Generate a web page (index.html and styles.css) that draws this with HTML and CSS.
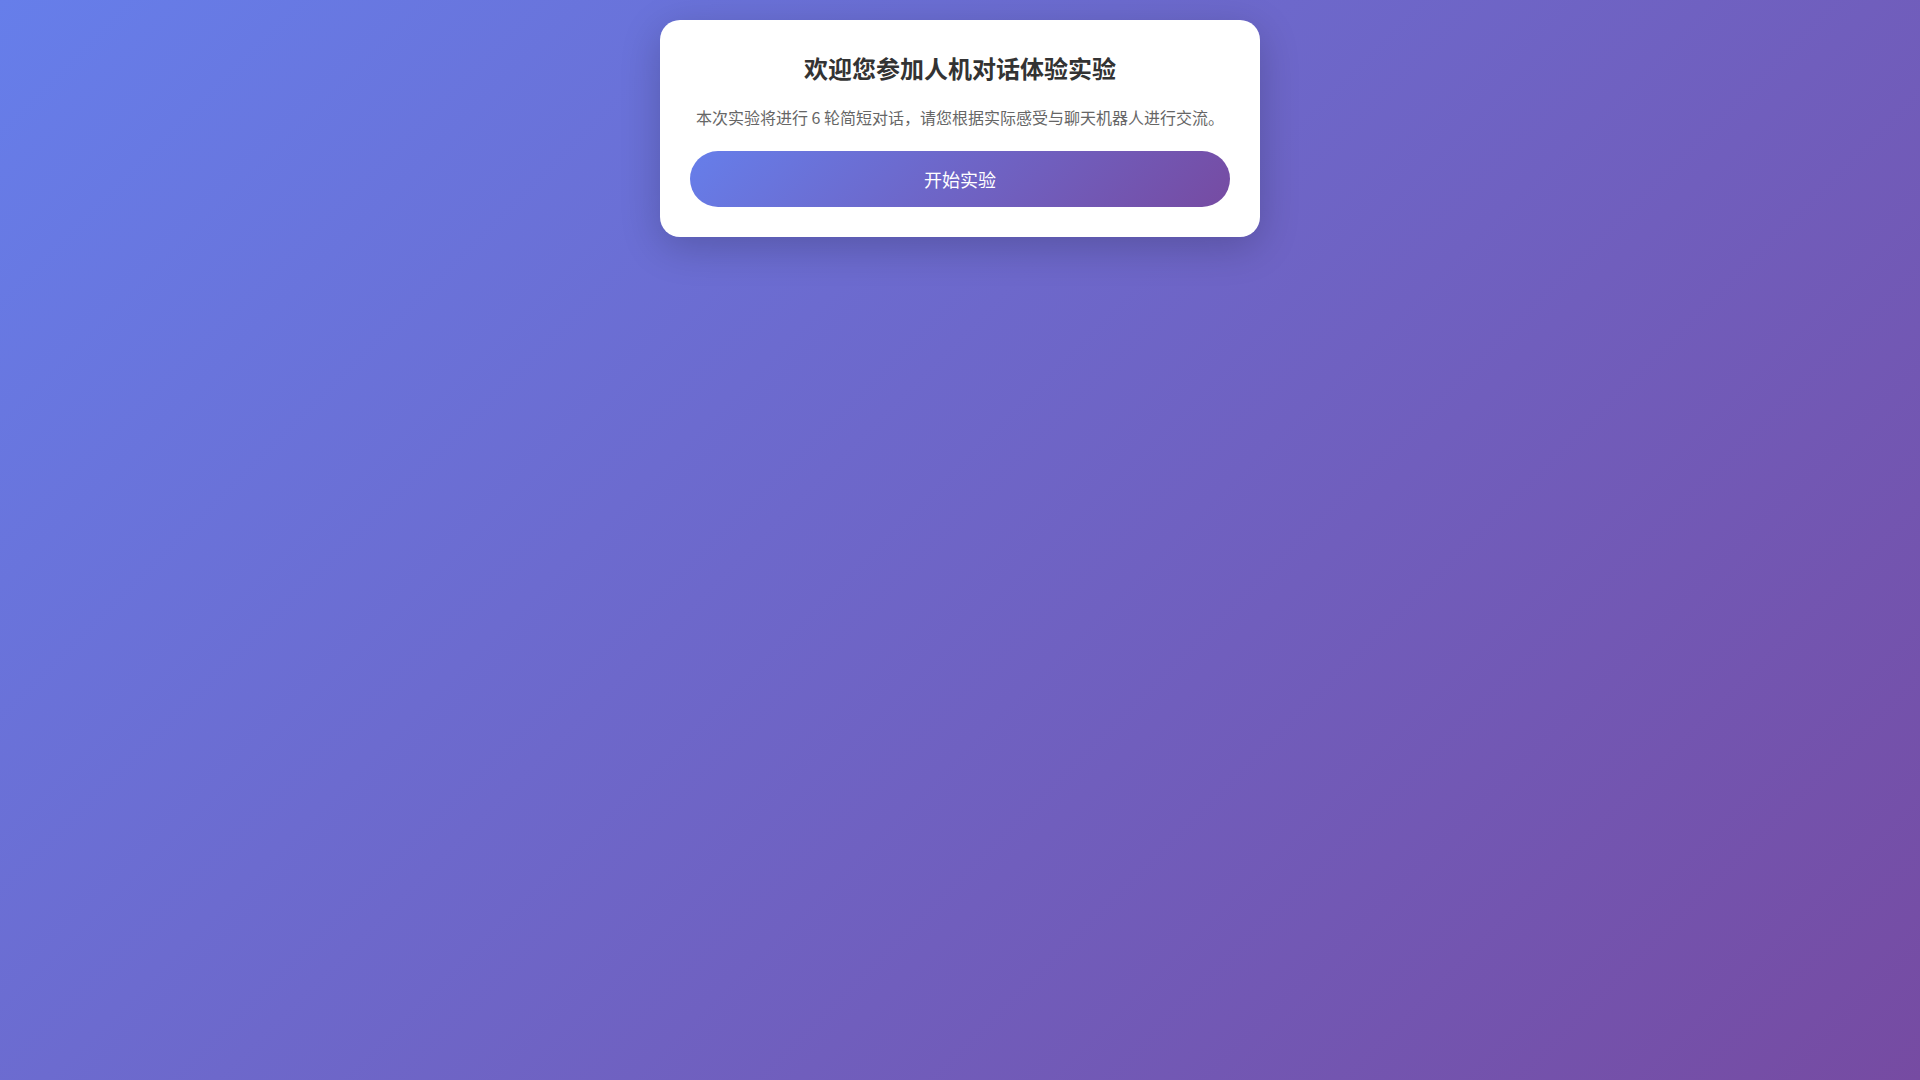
FILE: index.html
```html
<!DOCTYPE html>
<html lang="zh-CN">
<head>
<meta charset="UTF-8">
<title>人机对话体验实验</title>
<link rel="stylesheet" href="styles.css">
</head>
<body>
<main class="page">
  <section class="card">
    <h1 class="title">欢迎您参加人机对话体验实验</h1>
    <p class="desc">本次实验将进行 6 轮简短对话，请您根据实际感受与聊天机器人进行交流。</p>
    <button class="start-btn" type="button">开始实验</button>
  </section>
</main>
</body>
</html>
```
FILE: styles.css
```css
* { box-sizing: border-box; }
html, body { margin: 0; padding: 0; }
body {
  min-height: 100vh;
  background: linear-gradient(135deg, #667eea 0%, #764ba2 100%);
  font-family: "Noto Sans CJK SC", "Noto Sans", sans-serif;
}
.page {
  padding: 20px;
  display: flex;
  justify-content: center;
}
.card {
  width: 600px;
  background: #fff;
  border-radius: 20px;
  padding: 30px;
  box-shadow: 0 10px 40px rgba(0, 0, 0, 0.2);
  display: flex;
  flex-direction: column;
  align-items: center;
}
.title {
  margin: 0 0 19px;
  font-size: 24px;
  font-weight: 700;
  color: #333;
  line-height: 36px;
}
.desc {
  margin: 0 0 22px;
  font-size: 16px;
  line-height: 24px;
  color: #666;
}
.start-btn {
  width: 100%;
  height: 56px;
  border: none;
  border-radius: 28px;
  background: linear-gradient(135deg, #667eea 0%, #764ba2 100%);
  color: #fff;
  font-family: inherit;
  font-size: 18px;
  cursor: pointer;
}
```
